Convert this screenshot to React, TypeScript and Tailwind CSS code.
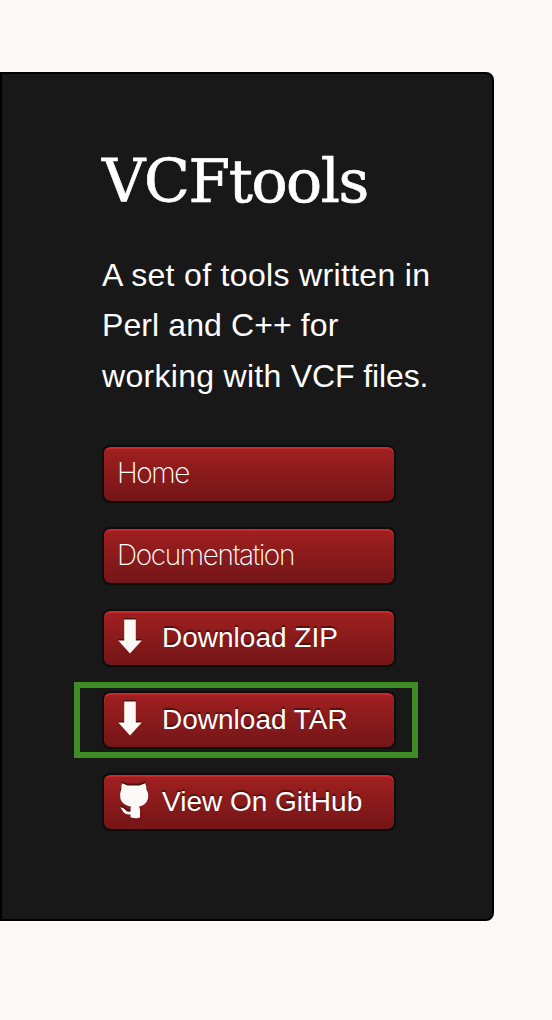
import type { ReactNode } from "react";

function ArrowIcon() {
  return (
    <svg className="absolute left-[14px] top-[5px] h-[40px] w-[30px]" viewBox="0 0 30 40">
      <path d="M6 4h12v21h6L12 38 0 25h6z" transform="translate(0 -2)" fill="#000" opacity=".45" />
      <path d="M6.200 3.500h11.600v21h6L12 37.500.300 24.500h5.900z" fill="#fcfaf7" />
    </svg>
  );
}

function OctocatIcon() {
  const body =
    "M4 3.200 9.500 5.500H21.500L27.300 3.200Q28.500 6 28.500 9.500Q31 13 29.800 19Q28.300 25 21 26.700Q22 28 22 30V37.200Q19 39.500 12.500 37.200V34.500Q7 34.800 5 31.500Q3.500 28.600 2.200 27.500Q5 27 7 29.500Q9 32.300 12.500 31.500Q12.300 28 13 26.700Q4.500 25 2.500 19Q1.500 13 3.300 9.500Q3 6 4 3.200Z";
  return (
    <svg className="absolute left-[14px] top-[5px] h-[40px] w-[31px]" viewBox="0 0 31 40">
      <path d={body} transform="translate(0 -2)" fill="#000" opacity=".5" />
      <path d={body} fill="#fcfaf7" />
    </svg>
  );
}

function MenuButton({ children }: { children: ReactNode }) {
  return (
    <a className="relative flex h-[58px] w-[294px] items-center rounded-[8px] border-2 border-[#0d0d0d] bg-linear-to-b from-[#a12020] to-[#741517] bg-clip-padding text-white shadow-[inset_0_2px_1px_#cb2a2d]">
      {children}
    </a>
  );
}

function ThinLabel({ children }: { children: string }) {
  return (
    <span className="mb-[2px] ml-[13px] font-['Inter',sans-serif] text-[28px] font-extralight leading-[52px] tracking-[-1.35px]">
      {children}
    </span>
  );
}

function Label({ children }: { children: string }) {
  return (
    <span className="ml-[58px] whitespace-nowrap text-[28px] leading-[54px] [text-shadow:0_-2px_1px_rgba(0,0,0,0.45)]">
      {children}
    </span>
  );
}

export default function App() {
  return (
    <div className="h-[1020px] w-[552px] overflow-hidden bg-[#fcfaf6] pt-[72px] font-['Liberation_Sans',sans-serif]">
      <main className="flex h-[849px] w-[494px] flex-col rounded-r-[8px] border-2 border-black bg-[#181818] pl-[100px] pt-[66px] text-white">
        <h1 className="h-[84px] whitespace-nowrap font-['DejaVu_Serif',serif] text-[60px] leading-[82px] tracking-[-1.4px] [-webkit-text-stroke:0.7px_white]">
          VCFtools
        </h1>
        <p className="mt-[26px] flex h-[152px] flex-col whitespace-nowrap text-[32px]">
          <span className="h-[50px] leading-[50px] tracking-[0.33px]">A set of tools written in</span>
          <span className="h-[51px] leading-[50px] tracking-[0.1px]">Perl and C++ for</span>
          <span className="h-[51px] leading-[51px]">
            <span className="tracking-[0.3px]">working with </span>
            <span className="tracking-[-0.12px]">VCF files.</span>
          </span>
        </p>
        <nav className="mt-[43px] flex flex-col gap-[24px]">
          <MenuButton><ThinLabel>Home</ThinLabel></MenuButton>
          <MenuButton><ThinLabel>Documentation</ThinLabel></MenuButton>
          <MenuButton><ArrowIcon /><Label>Download ZIP</Label></MenuButton>
          <div className="relative">
            <MenuButton><ArrowIcon /><Label>Download TAR</Label></MenuButton>
            <div className="absolute left-[-28px] top-[-9px] h-[76px] w-[344px] border-6 border-[#3f8b26]" />
          </div>
          <MenuButton><OctocatIcon /><Label>View On GitHub</Label></MenuButton>
        </nav>
      </main>
    </div>
  );
}
